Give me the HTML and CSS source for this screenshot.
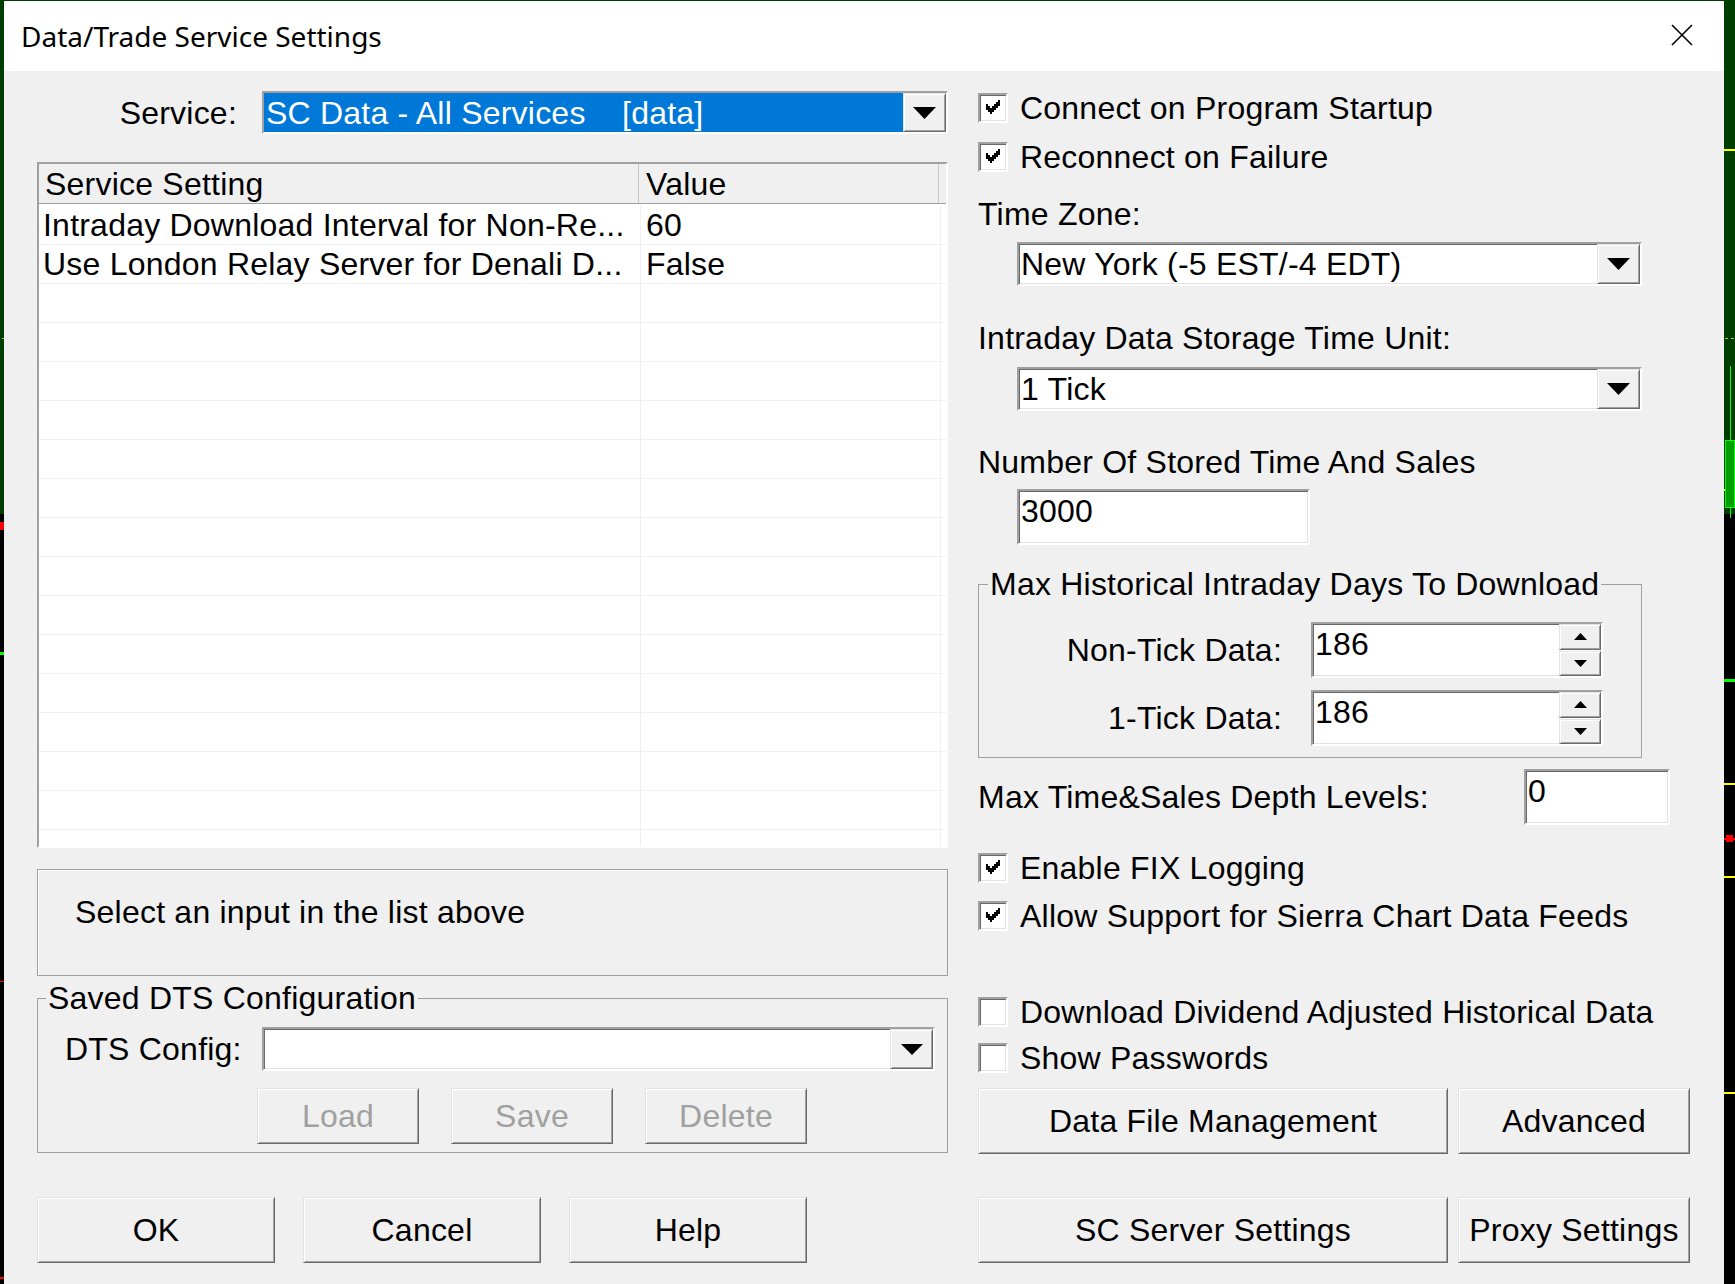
FILE: index.html
```html
<!DOCTYPE html>
<html lang="en">
<head>
<meta charset="utf-8">
<title>Data/Trade Service Settings</title>
<link rel="stylesheet" href="styles.css">
</head>
<body>
<div class="screen">
  <svg class="strip" width="4" height="1284" viewBox="0 0 4 1284" aria-hidden="true">
    <rect width="4" height="514" fill="#003d00"/>
    <rect y="514" width="4" height="770" fill="#000"/>
    <rect x="2" y="338" width="2" height="1" fill="#c8c800"/>
    <rect y="522" width="4" height="8" fill="#ff0000"/>
    <rect y="652" width="4" height="3" fill="#00ff00"/>
    <rect y="981" width="4" height="1" fill="#ff0000"/>
    <rect y="1277" width="4" height="2" fill="#ff0000"/>
  </svg>

  <div class="center">
    <div class="dialog">
      <div class="titlebar">
        <span class="title">Data/Trade Service Settings</span>
        <svg class="close" width="22" height="22" viewBox="0 0 22 22" aria-hidden="true">
          <path d="M1 1 L21 21 M21 1 L1 21" stroke="#000" stroke-width="1.6" fill="none"/>
        </svg>
      </div>

      <div class="dlg-body">
        <!-- LEFT COLUMN -->
        <div class="col-left">
          <div class="service-row">
            <span class="service-label">Service:</span>
            <div class="combo service sunken">
              <span class="combo-text selected">SC Data - All Services    [data]</span>
              <span class="combo-btn raised">
                <svg width="23" height="12" viewBox="0 0 23 12"><polygon points="0,0 23,0 11.5,12" fill="#000"/></svg>
              </span>
            </div>
          </div>

          <div class="list sunken">
            <div class="list-head">
              <div class="lh-cell c1">Service Setting</div>
              <div class="lh-cell c2">Value</div>
              <div class="lh-rest"></div>
            </div>
            <div class="list-body">
              <div class="row"><div class="cell c1">Intraday Download Interval for Non-Re...</div><div class="cell c2">60</div></div>
              <div class="row"><div class="cell c1">Use London Relay Server for Denali D...</div><div class="cell c2">False</div></div>
              <div class="row"><div class="cell c1"></div><div class="cell c2"></div></div>
              <div class="row"><div class="cell c1"></div><div class="cell c2"></div></div>
              <div class="row"><div class="cell c1"></div><div class="cell c2"></div></div>
              <div class="row"><div class="cell c1"></div><div class="cell c2"></div></div>
              <div class="row"><div class="cell c1"></div><div class="cell c2"></div></div>
              <div class="row"><div class="cell c1"></div><div class="cell c2"></div></div>
              <div class="row"><div class="cell c1"></div><div class="cell c2"></div></div>
              <div class="row"><div class="cell c1"></div><div class="cell c2"></div></div>
              <div class="row"><div class="cell c1"></div><div class="cell c2"></div></div>
              <div class="row"><div class="cell c1"></div><div class="cell c2"></div></div>
              <div class="row"><div class="cell c1"></div><div class="cell c2"></div></div>
              <div class="row"><div class="cell c1"></div><div class="cell c2"></div></div>
              <div class="row"><div class="cell c1"></div><div class="cell c2"></div></div>
              <div class="row"><div class="cell c1"></div><div class="cell c2"></div></div>
              <div class="row"><div class="cell c1"></div><div class="cell c2"></div></div>
            </div>
          </div>

          <div class="info">Select an input in the list above</div>

          <fieldset class="group saved">
            <legend>Saved DTS Configuration</legend>
            <div class="dts-row">
              <span class="dts-label">DTS Config:</span>
              <div class="combo dts sunken">
                <span class="combo-text"></span>
                <span class="combo-btn raised">
                  <svg width="22" height="11" viewBox="0 0 22 11"><polygon points="0,0 22,0 11,11" fill="#000"/></svg>
                </span>
              </div>
            </div>
            <div class="dts-btns">
              <button class="btn raised disabled w162">Load</button>
              <button class="btn raised disabled w162">Save</button>
              <button class="btn raised disabled w162">Delete</button>
            </div>
          </fieldset>

          <div class="bottom-btns">
            <button class="btn raised big w238">OK</button>
            <button class="btn raised big w238">Cancel</button>
            <button class="btn raised big w238">Help</button>
          </div>
        </div>

        <!-- RIGHT COLUMN -->
        <div class="col-right">
          <div class="cb-row">
            <span class="cb sunken"><svg width="14" height="14" viewBox="0 0 7 7" shape-rendering="crispEdges"><path d="M6 0h1v1h-1z M5 1h2v1h-2z M0 2h1v1h-1z M4 2h3v1h-3z M0 3h2v1h-2z M3 3h3v1h-3z M0 4h5v1h-5z M1 5h3v1h-3z M2 6h1v1h-1z" fill="#000"/></svg></span>
            <span>Connect on Program Startup</span>
          </div>
          <div class="cb-row m19">
            <span class="cb sunken"><svg width="14" height="14" viewBox="0 0 7 7" shape-rendering="crispEdges"><path d="M6 0h1v1h-1z M5 1h2v1h-2z M0 2h1v1h-1z M4 2h3v1h-3z M0 3h2v1h-2z M3 3h3v1h-3z M0 4h5v1h-5z M1 5h3v1h-3z M2 6h1v1h-1z" fill="#000"/></svg></span>
            <span>Reconnect on Failure</span>
          </div>

          <div class="lbl m22">Time Zone:</div>
          <div class="combo wide sunken m8">
            <span class="combo-text">New York (-5 EST/-4 EDT)</span>
            <span class="combo-btn raised">
              <svg width="23" height="12" viewBox="0 0 23 12"><polygon points="0,0 23,0 11.5,12" fill="#000"/></svg>
            </span>
          </div>

          <div class="lbl m32">Intraday Data Storage Time Unit:</div>
          <div class="combo wide sunken m9">
            <span class="combo-text">1 Tick</span>
            <span class="combo-btn raised">
              <svg width="23" height="12" viewBox="0 0 23 12"><polygon points="0,0 23,0 11.5,12" fill="#000"/></svg>
            </span>
          </div>

          <div class="lbl m31">Number Of Stored Time And Sales</div>
          <div class="edit sunken stored m7">3000</div>

          <fieldset class="group hist">
            <legend>Max Historical Intraday Days To Download</legend>
            <div class="spin-grid">
              <span class="spin-label">Non-Tick Data:</span>
              <div class="spin sunken">
                <span class="spin-text">186</span>
                <span class="spin-btns">
                  <span class="spin-btn raised"><svg width="13" height="7" viewBox="0 0 13 7"><polygon points="0,7 13,7 6.5,0" fill="#000"/></svg></span>
                  <span class="spin-btn raised"><svg width="13" height="7" viewBox="0 0 13 7"><polygon points="0,0 13,0 6.5,7" fill="#000"/></svg></span>
                </span>
              </div>
              <span class="spin-label">1-Tick Data:</span>
              <div class="spin sunken">
                <span class="spin-text">186</span>
                <span class="spin-btns">
                  <span class="spin-btn raised"><svg width="13" height="7" viewBox="0 0 13 7"><polygon points="0,7 13,7 6.5,0" fill="#000"/></svg></span>
                  <span class="spin-btn raised"><svg width="13" height="7" viewBox="0 0 13 7"><polygon points="0,0 13,0 6.5,7" fill="#000"/></svg></span>
                </span>
              </div>
            </div>
          </fieldset>

          <div class="depth-row">
            <span>Max Time&amp;Sales Depth Levels:</span>
            <div class="edit sunken depth">0</div>
          </div>

          <div class="cb-row m28">
            <span class="cb sunken"><svg width="14" height="14" viewBox="0 0 7 7" shape-rendering="crispEdges"><path d="M6 0h1v1h-1z M5 1h2v1h-2z M0 2h1v1h-1z M4 2h3v1h-3z M0 3h2v1h-2z M3 3h3v1h-3z M0 4h5v1h-5z M1 5h3v1h-3z M2 6h1v1h-1z" fill="#000"/></svg></span>
            <span>Enable FIX Logging</span>
          </div>
          <div class="cb-row m18">
            <span class="cb sunken"><svg width="14" height="14" viewBox="0 0 7 7" shape-rendering="crispEdges"><path d="M6 0h1v1h-1z M5 1h2v1h-2z M0 2h1v1h-1z M4 2h3v1h-3z M0 3h2v1h-2z M3 3h3v1h-3z M0 4h5v1h-5z M1 5h3v1h-3z M2 6h1v1h-1z" fill="#000"/></svg></span>
            <span>Allow Support for Sierra Chart Data Feeds</span>
          </div>

          <div class="cb-row m66">
            <span class="cb sunken"></span>
            <span>Download Dividend Adjusted Historical Data</span>
          </div>
          <div class="cb-row m16">
            <span class="cb sunken"></span>
            <span>Show Passwords</span>
          </div>

          <div class="btn-row m15">
            <button class="btn raised big w470">Data File Management</button>
            <button class="btn raised big w232">Advanced</button>
          </div>
          <div class="btn-row m43">
            <button class="btn raised big w470">SC Server Settings</button>
            <button class="btn raised big w232">Proxy Settings</button>
          </div>
        </div>
      </div>
    </div>
  </div>

  <svg class="strip" width="11" height="1284" viewBox="0 0 11 1284" aria-hidden="true">
    <rect width="11" height="514" fill="#003d00"/>
    <rect y="514" width="11" height="770" fill="#000"/>
    <rect y="149" width="11" height="2" fill="#ffff00"/>
    <rect x="1" y="338" width="3" height="1" fill="#c8c800"/>
    <rect x="7" y="338" width="3" height="1" fill="#c8c800"/>
    <rect x="6" y="366" width="1" height="152" fill="#00ff00"/>
    <rect x="1.5" y="440.5" width="9" height="67" fill="#00a000" stroke="#00ff00" stroke-width="1"/>
    <rect x="0" y="489" width="1" height="2" fill="#ffff00"/>
    <rect y="679" width="11" height="3" fill="#00ff00"/>
    <rect y="783" width="11" height="2" fill="#ffff00"/>
    <rect y="838" width="11" height="2" fill="#ff0000"/>
    <rect x="2" y="835" width="7" height="7" fill="#ff0000"/>
    <rect y="876" width="11" height="2" fill="#ffff00"/>
    <rect y="1092" width="11" height="2" fill="#ffff00"/>
  </svg>
</div>
</body>
</html>
```

FILE: styles.css
```css
* { box-sizing: border-box; }

html, body {
  margin: 0;
  padding: 0;
  background: #000;
}

body {
  font-family: "Liberation Sans", Arial, sans-serif;
  font-size: 32px;
  line-height: 40px;
  letter-spacing: 0.22px;
  color: #000;
  overflow: hidden;
}

.screen {
  display: flex;
  width: 1735px;
  height: 1284px;
}

.strip { display: block; flex: none; }

.center {
  width: 1720px;
  flex: none;
  padding-top: 1px;
  background: #003d00;
}

.dialog {
  height: 1283px;
  background: #f0f0f0;
  display: flex;
  flex-direction: column;
}

/* title bar */
.titlebar {
  height: 70px;
  flex: none;
  background: #fff;
  display: flex;
  align-items: center;
  justify-content: space-between;
  padding: 0 31px 0 17px;
}
.title {
  font-family: "Noto Sans", "Liberation Sans", sans-serif;
  font-size: 28px;
  line-height: 40px;
  letter-spacing: 0;
  color: #000;
}
.close { display: block; margin-top: -2px; }

/* body */
.dlg-body {
  display: flex;
  gap: 30px;
  padding: 20px 0 0 33px;
}
.col-left {
  width: 911px;
  flex: none;
  display: flex;
  flex-direction: column;
}
.col-right {
  width: 712px;
  flex: none;
  display: flex;
  flex-direction: column;
  padding-top: 2px;
}

/* 3D borders */
.sunken {
  background: #fff;
  border: 2px solid;
  border-color: #a0a0a0 #fff #fff #a0a0a0;
  box-shadow: inset 1px 1px 0 #696969, inset -1px -1px 0 #e3e3e3;
}
.raised {
  background: #f0f0f0;
  border: 1px solid;
  border-color: #e3e3e3 #696969 #696969 #e3e3e3;
  box-shadow: inset 1px 1px 0 #fff, inset -1px -1px 0 #a0a0a0;
}

/* service row */
.service-row {
  display: flex;
  align-items: center;
  height: 43px;
  gap: 25px;
}
.service-label {
  width: 200px;
  text-align: right;
}

/* combo boxes */
.combo {
  display: flex;
  height: 44px;
  flex: none;
}
.combo.service { width: 686px; height: 43px; }
.combo.dts { width: 673px; }
.combo.wide { width: 625px; margin-left: 39px; }

.combo-text {
  flex: 1;
  min-width: 0;
  padding-left: 2px;
  white-space: pre;
  display: flex;
  align-items: center;
  overflow: hidden;
}
.combo-text.selected {
  background: #0078d7;
  color: #fff;
}
.combo-btn {
  width: 43px;
  flex: none;
  display: flex;
  align-items: center;
  justify-content: center;
}
.combo-btn svg { display: block; }

/* list */
.list {
  margin-top: 28px;
  height: 686px;
  overflow: hidden;
  display: flex;
  flex-direction: column;
  box-shadow: inset 1px 1px 0 #696969;
}
.list-head {
  display: flex;
  flex: none;
  height: 40px;
  background: #f0f0f0;
  border-bottom: 1px solid #a0a0a0;
}
.lh-cell {
  padding-left: 6px;
  border-right: 1px solid #c8c8c8;
  white-space: nowrap;
  overflow: hidden;
}
.lh-cell.c1 { width: 600px; }
.lh-cell.c2 { width: 300px; padding-left: 7px; }
.lh-rest { flex: 1; }

.list-body {
  padding-top: 2px;
  background: #fff;
  flex: 1;
}
.row {
  display: flex;
  height: 39px;
  border-bottom: 1px solid #f0f0f0;
}
.cell {
  white-space: nowrap;
  overflow: hidden;
  line-height: 38px;
  border-right: 1px solid #f0f0f0;
}
.cell.c1 { width: 602px; padding-left: 4px; }
.cell.c2 { width: 300px; padding-left: 5px; }

/* info box */
.info {
  margin-top: 21px;
  height: 107px;
  flex: none;
  border: 1px solid #a0a0a0;
  box-shadow: inset 1px 1px 0 #fff;
  padding: 22px 0 0 37px;
}

/* group boxes */
.group {
  margin: 0;
  border: 1px solid #a0a0a0;
  min-width: 0;
}
.group legend {
  padding: 0 2px;
  line-height: 40px;
}
.group.saved {
  margin-top: 2px;
  padding: 9px 0 8px 8px;
}
.group.hist {
  margin-top: 19px;
  width: 664px;
  padding: 18px 0 11px 9px;
}

.dts-row {
  display: flex;
  align-items: center;
  padding-left: 19px;
}
.dts-label { width: 197px; flex: none; }

.dts-btns {
  display: flex;
  gap: 32px;
  margin-top: 17px;
  padding-left: 211px;
}

/* buttons */
.btn {
  font: inherit;
  letter-spacing: inherit;
  color: #000;
  padding: 0;
  margin: 0;
  height: 56px;
  display: flex;
  align-items: center;
  justify-content: center;
  flex: none;
}
.btn.big { height: 66px; }
.btn.disabled { color: #a0a0a0; }
.w162 { width: 162px; }
.w238 { width: 238px; }
.w470 { width: 470px; }
.w232 { width: 232px; }

.bottom-btns {
  display: flex;
  gap: 28px;
  margin-top: 44px;
}
.btn-row {
  display: flex;
  gap: 10px;
}

/* checkboxes */
.cb-row {
  display: flex;
  align-items: center;
  height: 30px;
  gap: 12px;
  white-space: nowrap;
}
.cb {
  width: 30px;
  height: 30px;
  flex: none;
  display: block;
}
.cb svg {
  display: block;
  margin: 5px 0 0 6px;
}

/* labels / edits */
.lbl { line-height: 40px; }

.edit {
  height: 56px;
  padding-left: 2px;
  line-height: 40px;
}
.edit.stored { width: 293px; margin-left: 39px; }
.edit.depth { width: 146px; }

.spin-grid {
  display: grid;
  grid-template-columns: 294px 292px;
  column-gap: 29px;
  row-gap: 12px;
  align-items: center;
}
.spin-label { text-align: right; }
.spin {
  height: 56px;
  display: flex;
}
.spin-text {
  flex: 1;
  padding-left: 2px;
  line-height: 40px;
}
.spin-btns {
  width: 42px;
  flex: none;
  display: flex;
  flex-direction: column;
  gap: 1px;
  background: #fff;
}
.spin-btn {
  flex: 1;
  display: flex;
  align-items: center;
  justify-content: center;
}
.spin-btn svg { display: block; }

.depth-row {
  display: grid;
  grid-template-columns: 546px 146px;
  align-items: center;
  margin-top: 11px;
}

/* vertical spacing helpers */
.m7 { margin-top: 7px; }
.m8 { margin-top: 8px; }
.m9 { margin-top: 9px; }
.m15 { margin-top: 15px; }
.m16 { margin-top: 16px; }
.m18 { margin-top: 18px; }
.m19 { margin-top: 19px; }
.m22 { margin-top: 22px; }
.m28 { margin-top: 28px; }
.m31 { margin-top: 31px; }
.m32 { margin-top: 32px; }
.m43 { margin-top: 43px; }
.m66 { margin-top: 66px; }
```
